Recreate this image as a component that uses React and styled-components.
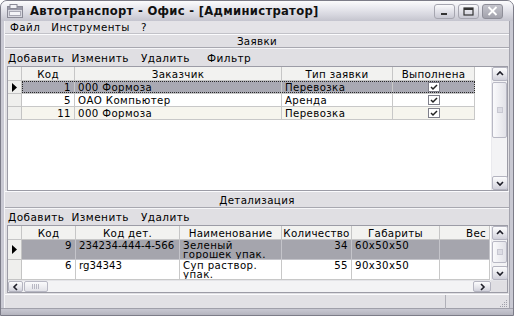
import React from "react";
import styled, { createGlobalStyle } from "styled-components";

const Global = createGlobalStyle`
  html, body { margin: 0; padding: 0; background: #fff; }
  body { width: 514px; height: 316px; overflow: hidden; }
  * { box-sizing: border-box; }
`;

const FONT = `"DejaVu Sans", Verdana, sans-serif`;

const Window = styled.div`
  width: 514px;
  height: 316px;
  display: flex;
  flex-direction: column;
  background: #c9c9d3;
  border: 1px solid #7c7c88;
  border-radius: 7px 7px 0 0;
  overflow: hidden;
  font-family: ${FONT};
  font-size: 10.5px;
  color: #000;
`;

const TitleBar = styled.div`
  height: 20px;
  flex: none;
  display: flex;
  align-items: center;
  padding: 0 6px 0 6px;
  gap: 6px;
  background: linear-gradient(#fbfbfc 0%, #e9e9ef 35%, #d6d6de 70%, #c4c4ce 100%);
`;

const TitleText = styled.div`
  flex: 1;
  font-weight: bold;
  font-size: 11.6px;
  letter-spacing: 0.3px;
  color: #111;
  white-space: nowrap;
`;

const CaptionButtons = styled.div`
  display: flex;
  gap: 3px;
  margin-right: 4px;
`;

const CaptionButton = styled.div`
  width: 21px;
  height: 15px;
  border-radius: 3px;
  border: 1px solid ${(p) => (p.$close ? "#8e8e98" : "#a6a6b0")};
  background: ${(p) =>
    p.$close
      ? "linear-gradient(#c4c4cc, #a2a2ac)"
      : "linear-gradient(#fafafc, #dcdce4 60%, #c8c8d2)"};
  display: flex;
  align-items: center;
  justify-content: center;
`;

const Body = styled.div`
  flex: 1;
  display: flex;
  flex-direction: column;
  margin: 0 3px;
  background: #e0dfe3;
  border-left: 1px solid #f4f4f6;
  border-right: 1px solid #a4a4ae;
  min-height: 0;
`;

const MenuBar = styled.div`
  height: 13px;
  flex: none;
  display: flex;
  align-items: center;
  gap: 11px;
  padding-left: 5px;
  background: #e4e3e7;
  border-bottom: 1px solid #c2c2c8;
  font-size: 10.3px;
  letter-spacing: 0.45px;
`;

const SectionHeader = styled.div`
  height: ${(p) => p.$h}px;
  flex: none;
  display: flex;
  align-items: center;
  justify-content: center;
  border-top: 1px solid #fbfbfd;
  border-bottom: 1px solid #a8a8b0;
  font-size: 10.3px;
  letter-spacing: 0.35px;
`;

const Toolbar = styled.div`
  height: ${(p) => p.$h}px;
  flex: none;
  display: flex;
  align-items: center;
  padding-left: 3px;
  border-top: 1px solid #f6f6f8;
  font-size: 10.5px;
  letter-spacing: 0.45px;
`;

const ToolItem = styled.span`
  margin-right: ${(p) => p.$mr}px;
`;

const GridBox = styled.div`
  height: ${(p) => p.$h}px;
  flex: none;
  margin: 0 1px 0 2px;
  border: 1px solid #9c9ca6;
  background: #fff;
  display: flex;
  flex-direction: column;
`;

const GridMain = styled.div`
  flex: 1;
  display: flex;
  min-height: 0;
`;

const Table = styled.div`
  flex: 1;
  display: flex;
  flex-direction: column;
  background: #fff;
  overflow: hidden;
`;

const Row = styled.div`
  display: grid;
  grid-template-columns: ${(p) => p.$cols};
  height: ${(p) => p.$h}px;
  flex: none;
  width: max-content;
  background: ${(p) => p.$bg || "transparent"};
`;

const HeadCell = styled.div`
  display: flex;
  align-items: center;
  justify-content: ${(p) => p.$align || "center"};
  padding: 0 3px;
  background: ${(p) => (p.$empty ? "#fff" : "#f2f2f0")};
  border-right: ${(p) => (p.$empty ? "none" : "1px solid #c6c6c6")};
  border-bottom: ${(p) => (p.$empty ? "none" : "1px solid #c6c6c6")};
  white-space: nowrap;
  font-size: 10.3px;
  letter-spacing: 0.3px;
  overflow: hidden;
`;

const IndCell = styled.div`
  background: #efefed;
  border-right: 1px solid #c4c4c4;
  border-bottom: 1px solid #c4c4c4;
  display: flex;
  align-items: center;
  justify-content: center;
`;

const Cell = styled.div`
  display: flex;
  align-items: ${(p) => (p.$top ? "flex-start" : "center")};
  justify-content: ${(p) => (p.$align === "right" ? "flex-end" : p.$align === "center" ? "center" : "flex-start")};
  padding: ${(p) => (p.$top ? "1px 3px 0" : "0 3px")};
  border-right: 1px solid ${(p) => p.$line || "#c8c8c8"};
  border-bottom: 1px solid ${(p) => p.$line || "#c8c8c8"};
  white-space: pre;
  line-height: 9px;
  font-size: 10.2px;
  letter-spacing: ${(p) => (p.$tight ? "0" : "0.4px")};
  overflow: hidden;
`;

const SelectedRow = styled.div`
  display: contents;
`;

const VScroll = styled.div`
  width: 16px;
  flex: none;
  display: flex;
  flex-direction: column;
  background: #f3f3f5;
  border-left: 1px solid #eaeaee;
`;

const ScrollBtn = styled.div`
  width: ${(p) => p.$w || 16}px;
  height: ${(p) => p.$h || 14}px;
  flex: none;
  border: 1px solid #b4b4c0;
  border-radius: 2px;
  background: linear-gradient(#fcfcfd, #e4e4ea 60%, #d0d0da);
  display: flex;
  align-items: center;
  justify-content: center;
`;

const Thumb = styled.div`
  flex: none;
  width: ${(p) => (p.$horiz ? `${p.$len}px` : "auto")};
  height: ${(p) => (p.$horiz ? "auto" : `${p.$len}px`)};
  margin: ${(p) => (p.$horiz ? "0 0 0 1px" : "1px 0 0")};
  border: 1px solid #b8b8c4;
  border-radius: 2px;
  background: ${(p) =>
    p.$horiz
      ? "linear-gradient(#fafafc, #e2e2e8)"
      : "linear-gradient(90deg, #fafafc, #e2e2e8)"};
  display: flex;
  align-items: center;
  justify-content: center;
`;

const Grip = styled.div`
  width: ${(p) => (p.$horiz ? 8 : 6)}px;
  height: ${(p) => (p.$horiz ? 5 : 6)}px;
  background: ${(p) =>
    p.$horiz
      ? "repeating-linear-gradient(90deg, #b8b8c4 0 1px, transparent 1px 2px)"
      : "#dcdce4"};
  border: ${(p) => (p.$horiz ? "none" : "1px solid #c8c8d2")};
`;

const Track = styled.div`
  flex: 1;
`;

const HScrollRow = styled.div`
  height: 12px;
  flex: none;
  display: flex;
  background: #f3f3f5;
  border-top: 1px solid #e4e4e8;
`;

const HScroll = styled.div`
  flex: 1;
  display: flex;
`;

const Corner = styled.div`
  width: 16px;
  flex: none;
  background: #e0dfe3;
`;

const StatusBar = styled.div`
  height: 15px;
  flex: none;
  margin-top: 1px;
  display: flex;
  border-top: 1px solid #fbfbfd;
  background: #e2e1e5;
`;

const StatusPanel = styled.div`
  width: ${(p) => (p.$w ? `${p.$w}px` : "auto")};
  flex: ${(p) => (p.$w ? "none" : 1)};
  border-right: ${(p) => (p.$sep ? "1px solid #b0b0b8" : "none")};
  position: relative;
`;

const GripMark = styled.svg`
  position: absolute;
  right: 1px;
  bottom: 1px;
`;

const BottomFrame = styled.div`
  height: 7px;
  flex: none;
  background: linear-gradient(#c8c8d2, #b4b4be);
  border-top: 1px solid #a0a0aa;
`;

const FocusRow = styled.div`
  display: grid;
  grid-template-columns: ${(p) => p.$cols};
  height: 13px;
  flex: none;
  width: max-content;
  position: relative;
  &::after {
    content: "";
    position: absolute;
    left: 14px;
    top: 0;
    width: ${(p) => p.$focusW}px;
    height: 12px;
    outline: 1px dotted #2a2a2a;
    outline-offset: -1px;
    pointer-events: none;
  }
`;

const chevronPaths = {
  up: "M3 6 L6 3 L9 6",
  down: "M3 4 L6 7 L9 4",
  left: "M7 2 L4 5 L7 8",
  right: "M5 2 L8 5 L5 8",
};

const Chevron = ({ dir }) => (
  <svg width="12" height="10" viewBox="0 0 12 10" style={{ display: "block" }}>
    <path d={chevronPaths[dir]} fill="none" stroke="#1e1e28" strokeWidth="1.6" />
  </svg>
);

const Check = () => (
  <svg width="12" height="10" viewBox="0 0 12 10" style={{ display: "block" }}>
    <rect x="0.5" y="0.5" width="11" height="9" fill="#fff" stroke="#7f7f8a" />
    <path d="M3 5 L5 7 L9 3" fill="none" stroke="#222" strokeWidth="1.5" />
  </svg>
);

const Arrow = () => (
  <svg width="7" height="9" viewBox="0 0 7 9" style={{ display: "block" }}>
    <path d="M1 0 L6 4.5 L1 9 Z" fill="#000" />
  </svg>
);

const AppIcon = () => (
  <svg width="17" height="14" viewBox="0 0 17 14" style={{ display: "block", flex: "none" }}>
    <rect x="0.5" y="2.5" width="15" height="11" fill="#d8d8e0" stroke="#8a8a96" />
    <rect x="1" y="3" width="14" height="3" fill="#9a9aa8" />
    <rect x="3" y="0.5" width="7" height="4" fill="#f2f2f6" stroke="#8a8a96" />
    <rect x="2.5" y="7.5" width="11" height="4" fill="#f4f4f8" stroke="#a8a8b4" />
  </svg>
);

const G1 = "14px 53px 207px 111px 82px 15px";
const G2 = "14px 54px 104px 102px 70px 88px 50px";

const orders = [
  { id: "1", customer: "000 Формоза", type: "Перевозка", bg: "#a9a9b3", sel: true },
  { id: "5", customer: "ОАО Компьютер", type: "Аренда", bg: "#fff" },
  { id: "11", customer: "000 Формоза", type: "Перевозка", bg: "#f6f5ee" },
];

const details = [
  { id: "9", code: "234234-444-4-566", name: "Зеленый\nгорошек упак.", qty: "34", size: "60x50x50", bg: "#a5a5ad", sel: true },
  { id: "6", code: "rg34343", name: "Суп раствор.\nупак.", qty: "55", size: "90x30x50", bg: "#fff" },
];

export default function App() {
  return (
    <>
      <Global />
      <Window>
        <TitleBar>
          <AppIcon />
          <TitleText>Автотранспорт - Офис - [Администратор]</TitleText>
          <CaptionButtons>
            <CaptionButton>
              <svg width="9" height="9" viewBox="0 0 9 9"><rect x="1" y="6" width="6" height="2" fill="#333" /></svg>
            </CaptionButton>
            <CaptionButton>
              <svg width="11" height="9" viewBox="0 0 11 9"><rect x="1" y="1" width="9" height="7" fill="none" stroke="#333" strokeWidth="1.2" /><rect x="1" y="1" width="9" height="2" fill="#333" /></svg>
            </CaptionButton>
            <CaptionButton $close>
              <svg width="11" height="10" viewBox="0 0 11 10"><path d="M1.5 1 L9.5 9 M9.5 1 L1.5 9" stroke="#fff" strokeWidth="1.8" /></svg>
            </CaptionButton>
          </CaptionButtons>
        </TitleBar>
        <Body>
          <MenuBar>
            <span>Файл</span>
            <span>Инструменты</span>
            <span>?</span>
          </MenuBar>
          <SectionHeader $h={14}>Заявки</SectionHeader>
          <Toolbar $h={18}>
            <ToolItem $mr={7}>Добавить</ToolItem>
            <ToolItem $mr={12}>Изменить</ToolItem>
            <ToolItem $mr={17}>Удалить</ToolItem>
            <ToolItem $mr={0}>Фильтр</ToolItem>
          </Toolbar>
          <GridBox $h={125}>
            <GridMain>
              <Table>
                <Row $cols={G1} $h={14}>
                  <HeadCell />
                  <HeadCell>Код</HeadCell>
                  <HeadCell>Заказчик</HeadCell>
                  <HeadCell>Тип заявки</HeadCell>
                  <HeadCell>Выполнена</HeadCell>
                  <HeadCell $empty />
                </Row>
                {orders.map((o) => {
                  const RowComp = o.sel ? FocusRow : Row;
                  return (
                    <RowComp key={o.id} $cols={G1} $h={13} $focusW={453}>
                      <IndCell>{o.sel ? <Arrow /> : null}</IndCell>
                      <Cell $align="right" style={{ background: o.bg }}>{o.id}</Cell>
                      <Cell style={{ background: o.bg }}>{o.customer}</Cell>
                      <Cell style={{ background: o.bg }}>{o.type}</Cell>
                      <Cell $align="center" style={{ background: o.bg }}><Check /></Cell>
                    </RowComp>
                  );
                })}
              </Table>
              <VScroll>
                <ScrollBtn><Chevron dir="up" /></ScrollBtn>
                <Thumb $len={56}><Grip /></Thumb>
                <Track />
                <ScrollBtn><Chevron dir="down" /></ScrollBtn>
              </VScroll>
            </GridMain>
          </GridBox>
          <SectionHeader $h={17}>Детализация</SectionHeader>
          <Toolbar $h={17}>
            <ToolItem $mr={7}>Добавить</ToolItem>
            <ToolItem $mr={12}>Изменить</ToolItem>
            <ToolItem $mr={0}>Удалить</ToolItem>
          </Toolbar>
          <GridBox $h={68}>
            <GridMain>
              <Table>
                <Row $cols={G2} $h={14}>
                  <HeadCell />
                  <HeadCell>Код</HeadCell>
                  <HeadCell>Код дет.</HeadCell>
                  <HeadCell>Наименование</HeadCell>
                  <HeadCell>Количество</HeadCell>
                  <HeadCell>Габариты</HeadCell>
                  <HeadCell $align="flex-end">Вес</HeadCell>
                </Row>
                {details.map((d) => {
                  const line = d.sel ? "#c4c4ca" : "#c8c8c8";
                  return (
                    <Row key={d.id} $cols={G2} $h={20} $bg={d.bg}>
                      <IndCell>{d.sel ? <Arrow /> : null}</IndCell>
                      <Cell $top $align="right" $line={line}>{d.id}</Cell>
                      <Cell $top $tight $line={line}>{d.code}</Cell>
                      <Cell $top $line={line}>{d.name}</Cell>
                      <Cell $top $align="right" $line={line}>{d.qty}</Cell>
                      <Cell $top $line={line}>{d.size}</Cell>
                      <Cell $top $line={line}></Cell>
                    </Row>
                  );
                })}
              </Table>
              <VScroll>
                <ScrollBtn><Chevron dir="up" /></ScrollBtn>
                <Thumb $len={22}><Grip /></Thumb>
                <Track />
                <ScrollBtn><Chevron dir="down" /></ScrollBtn>
              </VScroll>
            </GridMain>
            <HScrollRow>
              <HScroll>
                <ScrollBtn $w={15} $h={11}><Chevron dir="left" /></ScrollBtn>
                <Thumb $horiz $len={24}><Grip $horiz /></Thumb>
                <Track />
                <ScrollBtn $w={18} $h={11}><Chevron dir="right" /></ScrollBtn>
              </HScroll>
              <Corner />
            </HScrollRow>
          </GridBox>
          <StatusBar>
            <StatusPanel $w={441} $sep />
            <StatusPanel>
              <GripMark width="10" height="10" viewBox="0 0 10 10">
                <g fill="#a0a0aa">
                  <rect x="8" y="2" width="1" height="1" />
                  <rect x="6" y="4" width="1" height="1" />
                  <rect x="8" y="4" width="1" height="1" />
                  <rect x="4" y="6" width="1" height="1" />
                  <rect x="6" y="6" width="1" height="1" />
                  <rect x="8" y="6" width="1" height="1" />
                  <rect x="2" y="8" width="1" height="1" />
                  <rect x="4" y="8" width="1" height="1" />
                  <rect x="6" y="8" width="1" height="1" />
                  <rect x="8" y="8" width="1" height="1" />
                </g>
              </GripMark>
            </StatusPanel>
          </StatusBar>
        </Body>
        <BottomFrame />
      </Window>
    </>
  );
}
